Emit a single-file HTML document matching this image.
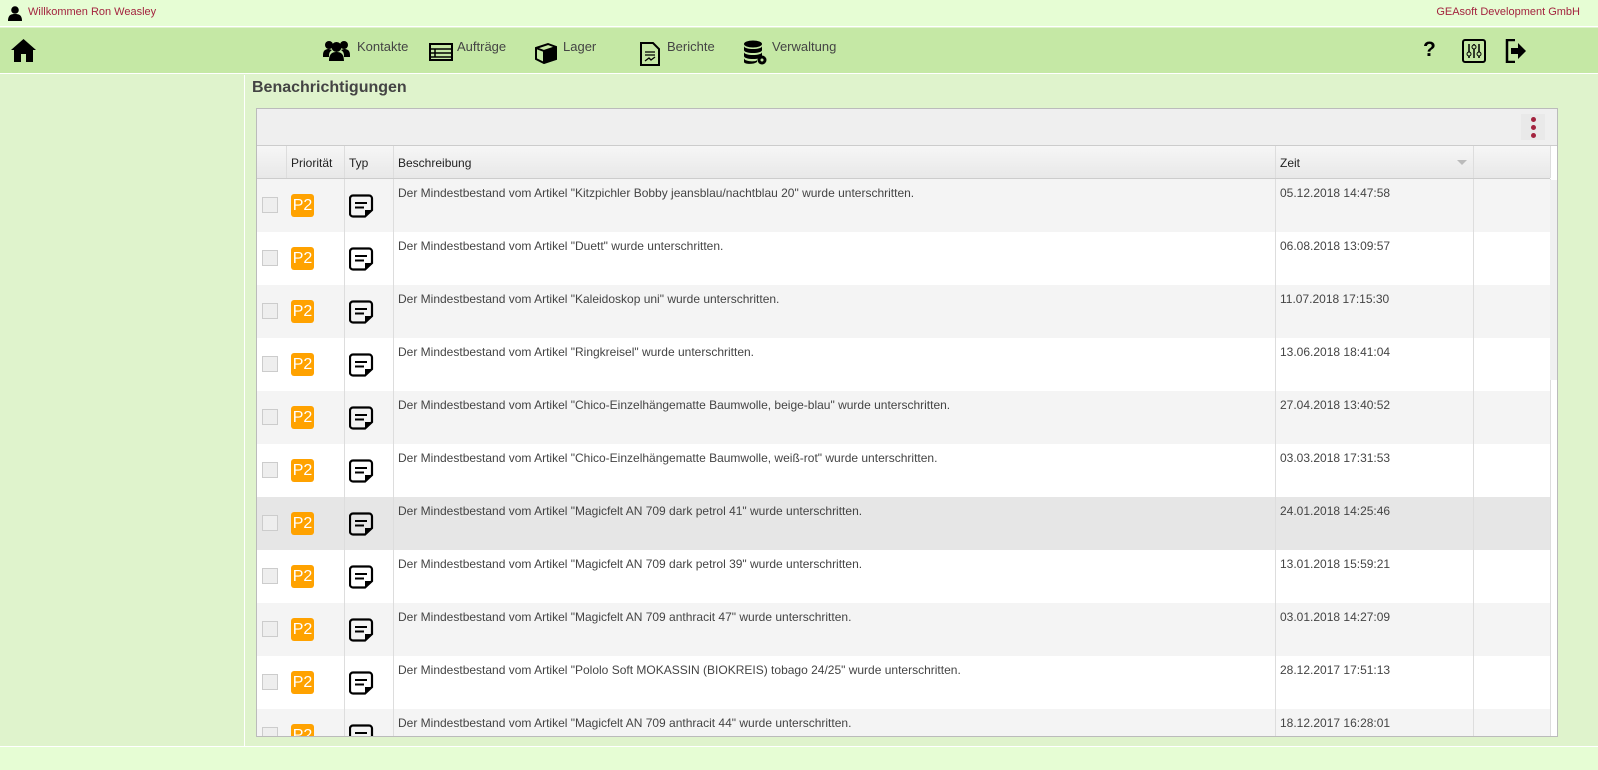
<!DOCTYPE html>
<html><head><meta charset="utf-8"><style>
*{margin:0;padding:0;box-sizing:border-box}
body{width:1598px;height:770px;overflow:hidden;background:#dff3cc;font-family:"Liberation Sans",sans-serif;position:relative;color:#444}
.top{position:absolute;left:0;top:0;width:1598px;height:27px;background:#e6fdd4;border-bottom:1px solid #fff}
.top span{position:absolute;top:6px;font-size:11px;color:#a3243f}
.nav{position:absolute;left:0;top:28px;width:1598px;height:46px;background:#c5e8a5;border-bottom:1px solid #fff}
.ni{position:absolute;top:11px;font-size:13px;color:#444}
.ni svg{position:absolute}
.left{position:absolute;left:0;top:75px;width:245px;height:671px;border-right:1px solid #fff}
.bot{position:absolute;left:0;top:746px;width:1598px;height:24px;background:#e6fdd4;border-top:1px solid #fff}
h1{position:absolute;left:252px;top:79px;font-size:16px;font-weight:bold;color:#444}
.box{position:absolute;left:256px;top:108px;width:1302px;height:629px;border:1px solid #bbb;background:#fff;overflow:hidden}
.tb{height:37px;background:#efefef;border-bottom:1px solid #ccc;position:relative}
.dots{position:absolute;right:12px;top:5px;width:24px;height:26px;background:#e9e9e9}
.dots i{position:absolute;left:10px;width:5px;height:5px;border-radius:50%;background:#a3243f}
.row{position:absolute;left:0;width:1293px;height:53px;font-size:12px}
.c{position:absolute;top:0;height:100%;border-right:1px solid #ddd}
.hd{top:37px;height:33px;background:linear-gradient(#f6f6f6,#e8e8e8);border-bottom:1px solid #ccc;color:#222}
.hd .c{padding-top:10px;padding-left:4px}
.cb{position:absolute;left:5px;top:18px;width:16px;height:16px;border:1px solid #ccc;background:#eee}
.p2{position:absolute;left:4px;top:15px;width:23px;height:23px;border-radius:3px;background:#ffa200;color:#fff;font-size:16px;line-height:23px;text-align:center}
.ic{position:absolute;left:4px;top:15px}
.t{padding:7px 4px}
.sb{position:absolute;right:0;top:71px;width:7px;height:200px;background:#f0f0f0}
</style></head><body>
<div class="top">
<svg style="position:absolute;left:8px;top:6px" width="14" height="15" viewBox="0 0 14 15"><circle cx="7" cy="4" r="3.8"/><path d="M0 15 C0 9 3 8 7 8 C11 8 14 9 14 15Z"/></svg>
<span style="left:28px">Willkommen Ron Weasley</span>
<span style="right:18px">GEAsoft Development GmbH</span>
</div>
<div class="nav">
<svg style="position:absolute;left:11px;top:11px" width="25" height="23" viewBox="0 0 25 23"><path d="M12.5 0 L25 11 L22 11 L22 23 L15 23 L15 15 L10 15 L10 23 L3 23 L3 11 L0 11Z"/></svg>
<div class="ni" style="left:323px"><svg style="left:0;top:0" width="27" height="22" viewBox="0 0 27 22"><circle cx="6" cy="6" r="4"/><circle cx="21" cy="6" r="4"/><circle cx="13.5" cy="8" r="5"/><path d="M0 16 C0 11 3 10 6 10 L9 11 C6 13 6 15 6 18 L0 18Z M27 16 C27 11 24 10 21 10 L18 11 C21 13 21 15 21 18 L27 18Z M6 22 C6 15 9 13 13.5 13 C18 13 21 15 21 22Z"/></svg><span style="margin-left:34px">Kontakte</span></div>
<div class="ni" style="left:429px"><svg style="left:0;top:4px" width="24" height="18" viewBox="0 0 24 18"><rect x="1" y="1" width="22" height="16" fill="none" stroke="#000" stroke-width="2"/><path d="M1 6H23M1 10H23M6 6V14M1 14H23" stroke="#000" stroke-width="1.5"/></svg><span style="margin-left:28px">Aufträge</span></div>
<div class="ni" style="left:534px"><svg style="left:0;top:3px" width="24" height="22" viewBox="0 0 24 22"><path d="M2 6 L14 2 L22 5 L22 17 L10 21 L2 17Z" fill="none" stroke="#000" stroke-width="2"/><path d="M2 6 L10 9 L22 5 M10 9 V21" stroke="#000" stroke-width="2" fill="none"/><path d="M10 9 L22 5 L22 17 L10 21Z"/></svg><span style="margin-left:29px">Lager</span></div>
<div class="ni" style="left:640px"><svg style="left:0;top:3px" width="20" height="24" viewBox="0 0 20 24"><path d="M1 1 H13 L19 7 V23 H1Z" fill="none" stroke="#000" stroke-width="2"/><path d="M5 10H15M5 13H15M5 19L9 16L11 18L15 15" stroke="#000" stroke-width="1.3" fill="none"/></svg><span style="margin-left:27px">Berichte</span></div>
<div class="ni" style="left:743px"><svg style="left:0;top:1px" width="26" height="26" viewBox="0 0 26 26"><ellipse cx="10" cy="4" rx="9" ry="3.5"/><path d="M1 6 C1 10 19 10 19 6 V10 C19 14 1 14 1 10Z M1 12 C1 16 19 16 19 12 V16 C19 20 1 20 1 16Z M1 18 C1 22 14 22 14 20 V22 C10 25 1 24 1 22Z"/><circle cx="19" cy="20" r="4.5"/><circle cx="19" cy="20" r="1.5" fill="#c5e8a5"/></svg><span style="margin-left:29px">Verwaltung</span></div>
<div style="position:absolute;left:1423px;top:10px;font-size:21px;font-weight:bold;color:#000">?</div>
<svg style="position:absolute;left:1462px;top:11px" width="24" height="24" viewBox="0 0 24 24"><rect x="1" y="1" width="22" height="22" rx="2" fill="none" stroke="#000" stroke-width="2"/><path d="M7 5V19M12 5V19M17 5V19" stroke="#000" stroke-width="1.5"/><circle cx="7" cy="15" r="2" fill="#c5e8a5" stroke="#000"/><circle cx="12" cy="8" r="2" fill="#c5e8a5" stroke="#000"/><circle cx="17" cy="15" r="2" fill="#c5e8a5" stroke="#000"/></svg>
<svg style="position:absolute;left:1505px;top:11px" width="22" height="24" viewBox="0 0 22 24"><path d="M10 1H2V23H10" fill="none" stroke="#000" stroke-width="2.5"/><path d="M6 9H13V4L21 12L13 20V15H6Z"/></svg>
</div>
<div class="left"></div>
<h1>Benachrichtigungen</h1>
<div class="box">
<div class="tb"><div class="dots"><i style="top:3px"></i><i style="top:11px"></i><i style="top:19px"></i></div></div>
<div class="row hd"><div class="c" style="left:0;width:30px"></div><div class="c" style="left:30px;width:58px">Priorität</div><div class="c" style="left:88px;width:49px">Typ</div><div class="c" style="left:137px;width:882px">Beschreibung</div><div class="c" style="left:1019px;width:198px">Zeit<span style="position:absolute;right:6px;top:14px;border:5px solid transparent;border-top:5px solid #bbb"></span></div><div class="c" style="left:1217px;width:77px"></div></div>
<div id="rows"></div>
<div class="sb"></div>
</div>
<div class="bot"></div>
<script>
var d=[['Kitzpichler Bobby jeansblau/nachtblau 20','05.12.2018 14:47:58'],['Duett','06.08.2018 13:09:57'],['Kaleidoskop uni','11.07.2018 17:15:30'],['Ringkreisel','13.06.2018 18:41:04'],['Chico-Einzelhängematte Baumwolle, beige-blau','27.04.2018 13:40:52'],['Chico-Einzelhängematte Baumwolle, weiß-rot','03.03.2018 17:31:53'],['Magicfelt AN 709 dark petrol 41','24.01.2018 14:25:46'],['Magicfelt AN 709 dark petrol 39','13.01.2018 15:59:21'],['Magicfelt AN 709 anthracit 47','03.01.2018 14:27:09'],['Pololo Soft MOKASSIN (BIOKREIS) tobago 24/25','28.12.2017 17:51:13'],['Magicfelt AN 709 anthracit 44','18.12.2017 16:28:01']];
var ic='<svg class="ic" width="25" height="24" viewBox="0 0 25 24"><path d="M4 1.5H20A3 3 0 0 1 23 4.5V16L16 22.5H4A3 3 0 0 1 1 19.5V4.5A3 3 0 0 1 4 1.5Z" fill="none" stroke="#000" stroke-width="2.2"/><path d="M23 16L16 22.5V16Z"/><path d="M6 9H18M6 13.5H15" stroke="#000" stroke-width="2"/></svg>';
var h='';d.forEach(function(r,i){var bg=i==6?'#e6e6e6':(i%2?'#fff':'#f4f4f4');
h+='<div class="row" style="top:'+(70+i*53)+'px;background:'+bg+'"><div class="c" style="left:0;width:30px;border:0"><div class="cb"></div></div><div class="c" style="left:30px;width:58px"><div class="p2">P2</div></div><div class="c" style="left:88px;width:49px">'+ic+'</div><div class="c t" style="left:137px;width:882px">Der Mindestbestand vom Artikel "'+r[0]+'" wurde unterschritten.</div><div class="c t" style="left:1019px;width:198px">'+r[1]+'</div><div class="c" style="left:1217px;width:77px"></div></div>';});
document.getElementById('rows').innerHTML=h;
</script>
</body></html>
